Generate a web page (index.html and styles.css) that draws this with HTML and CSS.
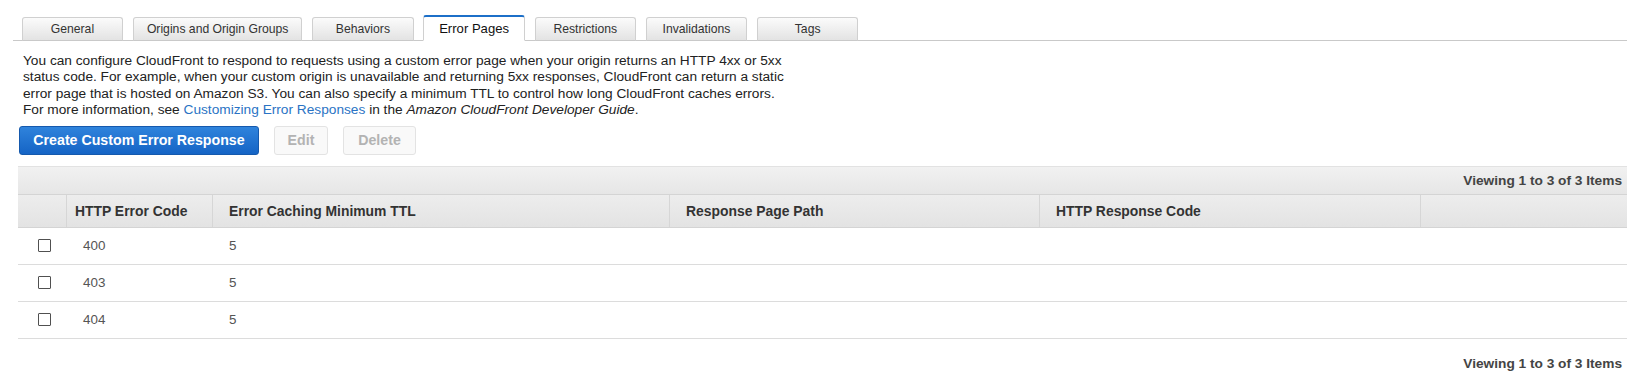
FILE: index.html
```html
<!DOCTYPE html>
<html>
<head>
<meta charset="utf-8">
<link rel="stylesheet" href="styles.css">
</head>
<body>
<div class="tabbar">
  <div class="tab">General</div>
  <div class="tab">Origins and Origin Groups</div>
  <div class="tab">Behaviors</div>
  <div class="tab active">Error Pages</div>
  <div class="tab">Restrictions</div>
  <div class="tab">Invalidations</div>
  <div class="tab">Tags</div>
</div>
<div class="content">
  <p class="desc">You can configure CloudFront to respond to requests using a custom error page when your origin returns an HTTP 4xx or 5xx status code. For example, when your custom origin is unavailable and returning 5xx responses, CloudFront can return a static error page that is hosted on Amazon S3. You can also specify a minimum TTL to control how long CloudFront caches errors. For more information, see <a class="link">Customizing Error Responses</a> in the <em>Amazon CloudFront Developer Guide</em>.</p>
  <div class="actions">
    <button class="btn primary">Create Custom Error Response</button>
    <button class="btn disabled edit">Edit</button>
    <button class="btn disabled delete">Delete</button>
  </div>
  <div class="grid">
    <div class="toolbar"><span class="count">Viewing 1 to 3 of 3 Items</span></div>
    <div class="row head">
      <div class="cell c1"></div>
      <div class="cell c2">HTTP Error Code</div>
      <div class="cell c3">Error Caching Minimum TTL</div>
      <div class="cell c4">Response Page Path</div>
      <div class="cell c5">HTTP Response Code</div>
      <div class="cell c6"></div>
    </div>
    <div class="row body">
      <div class="cell c1"><span class="cb"></span></div>
      <div class="cell c2">400</div>
      <div class="cell c3">5</div>
      <div class="cell c4"></div>
      <div class="cell c5"></div>
      <div class="cell c6"></div>
    </div>
    <div class="row body">
      <div class="cell c1"><span class="cb"></span></div>
      <div class="cell c2">403</div>
      <div class="cell c3">5</div>
      <div class="cell c4"></div>
      <div class="cell c5"></div>
      <div class="cell c6"></div>
    </div>
    <div class="row body">
      <div class="cell c1"><span class="cb"></span></div>
      <div class="cell c2">404</div>
      <div class="cell c3">5</div>
      <div class="cell c4"></div>
      <div class="cell c5"></div>
      <div class="cell c6"></div>
    </div>
  </div>
  <div class="footer"><span class="count">Viewing 1 to 3 of 3 Items</span></div>
</div>
</body>
</html>
```
FILE: styles.css
```css
html, body {
  margin: 0;
  padding: 0;
  background: #ffffff;
  overflow: hidden;
}
body {
  font-family: "Liberation Sans", Arial, sans-serif;
  font-size: 13px;
  color: #222;
  width: 1627px;
  height: 385px;
}
.tabbar {
  display: flex;
  align-items: flex-end;
  gap: 9.7px;
  margin: 0 0 0 13px;
  padding: 14px 0 0 8.7px;
  height: 26px;
  border-bottom: 1px solid #c9c9c9;
}
.tab {
  box-sizing: border-box;
  min-width: 101.5px;
  height: 24.5px;
  padding: 0 13px;
  margin-bottom: -1px;
  display: flex;
  align-items: center;
  justify-content: center;
  font-size: 12.2px;
  color: #333;
  border: 1px solid #d0d0d0;
  border-bottom-color: #c9c9c9;
  border-radius: 3px 3px 0 0;
  background: linear-gradient(#fbfbfb 0%, #efefef 50%, #e3e3e3 100%);
}
.tab.active {
  height: 26.5px;
  padding-top: 1px;
  background: #fff;
  border-top: 2px solid #1c6fc8;
  border-bottom-color: #fff;
  color: #111;
  font-size: 13.1px;
}
.content {
  padding: 0 0 0 18px;
}
.desc {
  margin: 12px 0 0 5px;
  width: 775px;
  line-height: 16.4px;
  font-size: 13.7px;
  color: #222;
}
.link {
  color: #2a73c4;
}
.desc em {
  font-style: italic;
}
.actions {
  display: flex;
  gap: 15px;
  margin-top: 7px;
  align-items: center;
}
.btn {
  box-sizing: border-box;
  height: 29px;
  font-family: "Liberation Sans", Arial, sans-serif;
  font-size: 14.2px;
  font-weight: bold;
  border-radius: 3px;
  padding: 0 10px;
}
.primary {
  margin-left: 1px;
  width: 240px;
  color: #fff;
  border: 1px solid #1559ad;
  background: linear-gradient(#2f83dc, #1564c5);
}
.disabled {
  color: #b3b3b3;
  background: #f9f9f9;
  border: 1px solid #e3e3e3;
}
.edit { width: 54px; }
.delete { width: 73px; }
.grid {
  margin-top: 11px;
  width: 1625px;
}
.toolbar {
  box-sizing: border-box;
  height: 29px;
  display: flex;
  align-items: center;
  justify-content: flex-end;
  padding-right: 21px;
  border-top: 1px solid #e2e2e2;
  border-bottom: 1px solid #d4d4d4;
  background: linear-gradient(#f1f1f1, #e6e6e6);
}
.count {
  font-weight: bold;
  color: #444;
  font-size: 13.7px;
}
.row {
  display: flex;
}
.row.head {
  height: 32px;
  background: linear-gradient(#ededed, #e3e3e3);
  border-bottom: 1px solid #d4d4d4;
  font-weight: bold;
  font-size: 13.9px;
  color: #333;
}
.row.body {
  height: 36px;
  border-bottom: 1px solid #dcdcdc;
  font-size: 13.4px;
  color: #555;
}
.cell {
  box-sizing: border-box;
  display: flex;
  align-items: center;
  padding-left: 16px;
}
.head .cell + .cell {
  border-left: 1px solid #d6d6d6;
}
.body .cell + .cell {
  border-left: 1px solid transparent;
}
.c1 { width: 48px; padding-left: 20px; }
.c2 { width: 146px; }
.head .c2 { padding-left: 8px; }
.c3 { width: 457px; }
.c4 { width: 370px; }
.c5 { width: 381px; }
.c6 { flex: 1; }
.cb {
  box-sizing: border-box;
  width: 13px;
  height: 13px;
  border: 1px solid #505050;
  border-radius: 1px;
  background: #fff;
}
.footer {
  width: 1625px;
  display: flex;
  justify-content: flex-end;
  box-sizing: border-box;
  padding-right: 21px;
  margin-top: 17px;
}
```
